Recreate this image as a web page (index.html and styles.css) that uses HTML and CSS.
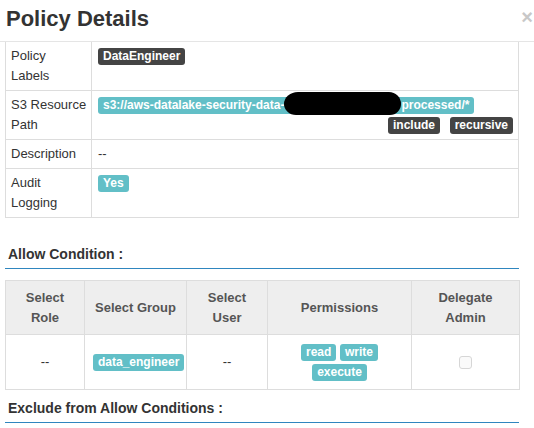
FILE: index.html
```html
<!DOCTYPE html>
<html>
<head>
<meta charset="utf-8">
<link rel="stylesheet" href="styles.css">
</head>
<body>
<div class="modal">
  <div class="modal-header">
    <h3 class="title">Policy Details</h3>
    <span class="close">×</span>
  </div>
  <div class="modal-body">
    <table class="details">
      <colgroup><col class="c-label"><col></colgroup>
      <tr>
        <td class="lbl">Policy<br>Labels</td>
        <td><span class="badge dark">DataEngineer</span></td>
      </tr>
      <tr>
        <td class="lbl">S3 Resource<br>Path</td>
        <td>
          <div><span class="badge teal">s3://aws-datalake-security-data-<span class="redact"></span>processed/*</span></div>
          <div class="flags"><span class="badge dark">include</span> <span class="badge dark">recursive</span></div>
        </td>
      </tr>
      <tr>
        <td class="lbl">Description</td>
        <td>--</td>
      </tr>
      <tr>
        <td class="lbl">Audit<br>Logging</td>
        <td><span class="badge teal">Yes</span></td>
      </tr>
    </table>

    <h4 class="section">Allow Condition :</h4>

    <table class="cond">
      <colgroup>
        <col class="w1"><col class="w2"><col class="w3"><col class="w4"><col class="w5">
      </colgroup>
      <thead>
        <tr>
          <th>Select<br>Role</th>
          <th>Select Group</th>
          <th>Select<br>User</th>
          <th>Permissions</th>
          <th>Delegate<br>Admin</th>
        </tr>
      </thead>
      <tbody>
        <tr>
          <td>--</td>
          <td><span class="badge teal">data_engineer</span></td>
          <td>--</td>
          <td class="perms"><span class="badge teal">read</span> <span class="badge teal">write</span> <span class="badge teal">execute</span></td>
          <td><span class="checkbox"></span></td>
        </tr>
      </tbody>
    </table>

    <h4 class="section section2">Exclude from Allow Conditions :</h4>
  </div>
</div>
</body>
</html>
```

FILE: styles.css
```css
* { box-sizing: border-box; }
html, body {
  margin: 0;
  padding: 0;
  background: #fff;
}
body {
  font-family: "Liberation Sans", Arial, Helvetica, sans-serif;
  font-size: 13px;
  line-height: 20px;
  color: #333;
  width: 534px;
  height: 428px;
  overflow: hidden;
}
.modal-header {
  display: flex;
  justify-content: space-between;
  align-items: flex-start;
  height: 42px;
  padding: 5px 1px 0 6px;
  border-bottom: 1px solid #e5e5e5;
}
.title {
  margin: 0;
  font-size: 22px;
  line-height: 28px;
  font-weight: bold;
  color: #333;
}
.close {
  font-size: 20px;
  font-weight: bold;
  line-height: 20px;
  color: #c8c8c8;
  margin-top: 2px;
}
.modal-body {
  padding: 0 15px 0 5px;
}
table {
  border-collapse: collapse;
  width: 514px;
  table-layout: fixed;
}
.details td {
  border: 1px solid #ddd;
  padding: 4px 6px;
  vertical-align: top;
  line-height: 20px;
}
.details tr:first-child td { border-top: 0; }
.details .c-label { width: 86px; }
.details .lbl { padding: 4px 0 4px 5px; white-space: nowrap; }
.flags {
  text-align: right;
  margin-right: -1px;
}
.flags .badge { margin-left: 6px; }
.badge {
  display: inline-block;
  font-size: 12px;
  font-weight: bold;
  line-height: 13px;
  padding: 2px 5px;
  border-radius: 3px;
  color: #fff;
  white-space: nowrap;
  vertical-align: baseline;
}
.badge.dark { background: #444; }
.badge.teal { background: #62bfc7; }
.redact {
  display: inline-block;
  width: 117px;
  height: 23px;
  margin: -7px 0 -3px;
  background: #000;
  border-radius: 14px 12px 11px 12px / 12px 12px 11px 11px;
  vertical-align: top;
}
.section {
  margin: 26px 0 0;
  padding: 0 3px 4px;
  font-size: 14px;
  line-height: 20px;
  font-weight: bold;
  color: #333;
  border-bottom: 1px solid #2f86bf;
}
.section2 { margin-top: 8px; }
.cond { margin-top: 11px; }
.cond .w1 { width: 79px; }
.cond .w2 { width: 102px; }
.cond .w3 { width: 81px; }
.cond .w4 { width: 144px; }
.cond .w5 { width: 108px; }
.cond th {
  background: #eee;
  border: 1px solid #ddd;
  color: #555;
  font-weight: bold;
  font-size: 13px;
  line-height: 20px;
  padding: 7px 4px 6px;
  text-align: center;
  vertical-align: middle;
}
.cond td {
  border: 1px solid #ddd;
  padding: 7px 8px;
  text-align: center;
  vertical-align: middle;
  line-height: 20px;
}
.cond .perms { padding: 7px 10px; }
.checkbox {
  display: inline-block;
  width: 13px;
  height: 13px;
  border: 1px solid #d6d6d6;
  border-radius: 3px;
  background: #fafafa;
  vertical-align: middle;
}
```
